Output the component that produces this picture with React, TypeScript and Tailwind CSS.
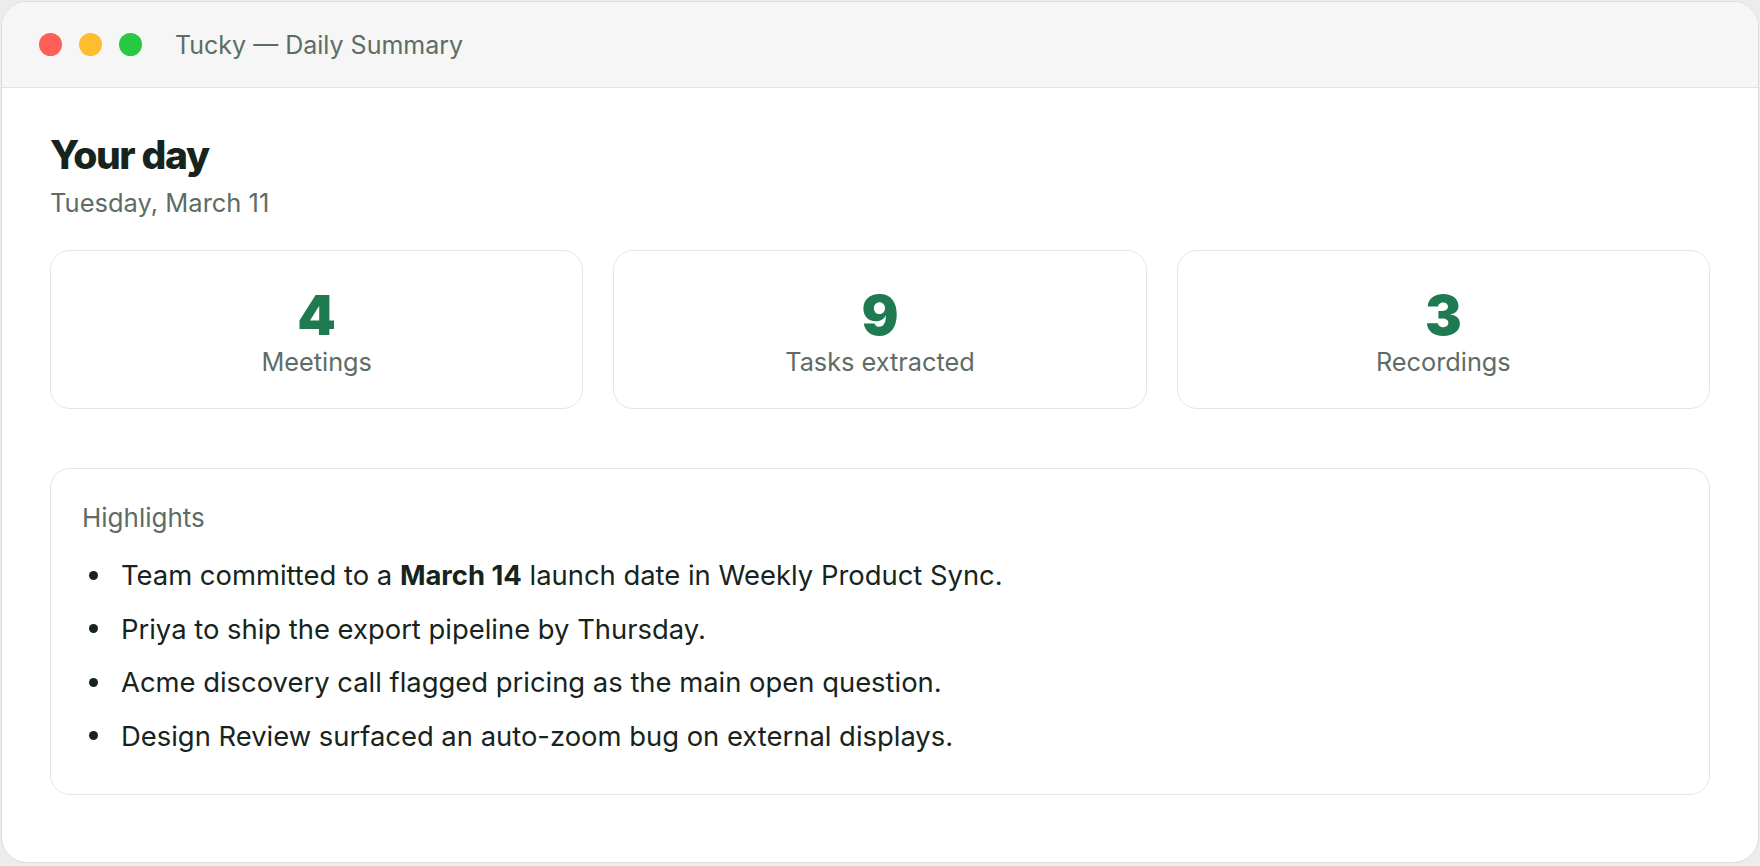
export default function App() {
  const stats = [
    { n: "4", label: "Meetings" },
    { n: "9", label: "Tasks extracted" },
    { n: "3", label: "Recordings" },
  ];
  const items = [
    <>Team committed to a <span className="font-bold">March 14</span> launch date in Weekly Product Sync.</>,
    <>Priya to ship the export pipeline by Thursday.</>,
    <>Acme discovery call flagged pricing as the main open question.</>,
    <>Design Review surfaced an auto-zoom bug on external displays.</>,
  ];
  return (
    <div className="w-[1760px] h-[866px] bg-[#ececec] pt-px pb-[3px] px-px font-['Inter',sans-serif]">
      <div className="h-full flex flex-col bg-white border border-[#dcdfdd] rounded-[26px] overflow-hidden">
        <div className="h-[86px] shrink-0 flex items-center bg-[#f5f6f5] border-b border-[#e1e4e2] pl-[37px]">
          <div className="flex items-center gap-[17px]">
            <span className="w-[23px] h-[23px] rounded-full bg-[#ff5f57]" />
            <span className="w-[23px] h-[23px] rounded-full bg-[#febc2e]" />
            <span className="w-[23px] h-[23px] rounded-full bg-[#28c840]" />
          </div>
          <div className="ml-[33px] text-[25px] leading-[32px] text-[#5d6d66]">Tucky — Daily Summary</div>
        </div>
        <div className="px-[48px] pt-[44px]">
          <h1 className="text-[39px] leading-[46px] font-extrabold tracking-[-0.035em] text-[#16241d]">Your day</h1>
          <div className="mt-[10px] text-[25.5px] leading-[30px] text-[#5d6d66]">Tuesday, March 11</div>
          <div className="mt-[32px] grid grid-cols-3 gap-[30px]">
            {stats.map((s) => (
              <div key={s.label} className="h-[159px] border border-[#e3e6e4] rounded-[20px] flex flex-col items-center pt-[37px]">
                <div className="text-[55px] leading-[55px] font-black text-[#1f7a52]">{s.n}</div>
                <div className="mt-[4px] text-[25.3px] leading-[30px] text-[#5d6d66]">{s.label}</div>
              </div>
            ))}
          </div>
          <div className="mt-[59px] h-[327px] border border-[#e3e6e4] rounded-[20px] pl-[31px] pt-[33px]">
            <div className="text-[26px] leading-[32px] text-[#5d6d66]">Highlights</div>
            <ul className="mt-[21px] flex flex-col gap-[13.5px]">
              {items.map((it, i) => (
                <li key={i} className="flex items-center text-[27.4px] leading-[40px] text-[#16241d]">
                  <span className="w-[9px] h-[9px] rounded-full bg-[#16241d] ml-[7px] mr-[23px] shrink-0" />
                  <span>{it}</span>
                </li>
              ))}
            </ul>
          </div>
        </div>
      </div>
    </div>
  );
}
